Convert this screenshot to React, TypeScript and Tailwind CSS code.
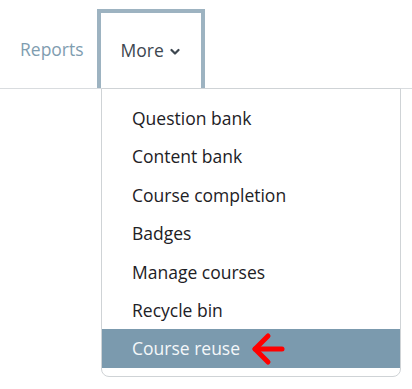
import React from "react";

const items = [
  "Question bank",
  "Content bank",
  "Course completion",
  "Badges",
  "Manage courses",
  "Recycle bin",
];

export default function App() {
  return (
    <div
      className="relative w-[412px] h-[389px] bg-white overflow-hidden"
      style={{ fontFamily: '"Open Sans", "Noto Sans", sans-serif' }}
    >
      {/* nav */}
      <div className="flex items-end h-[89px] border-b border-[#d9dcdf]">
        <div className="flex items-center h-[79px] pl-[20px] pr-[13px] pt-[2px] text-[17.5px] text-[#7f9db0]">
          Reports
        </div>
        <div className="flex items-center h-[79px] w-[108px] border-4 border-b-0 border-[#9db3c1] pl-[20px] text-[17.5px] text-[#3d4750]">
          <span>More</span>
          <svg width="10" height="8" viewBox="0 0 10 8" className="ml-[6px] mt-[2px]">
            <polyline
              points="1.5,2 5,5.5 8.5,2"
              fill="none"
              stroke="#3d4750"
              strokeWidth="2.2"
              strokeLinecap="round"
              strokeLinejoin="round"
            />
          </svg>
        </div>
      </div>

      {/* dropdown */}
      <div className="absolute left-[101px] top-[88px] w-[300px] bg-white border border-[#cfd3d6] rounded-b-lg pt-[10px] pb-[8px]">
        {items.map((t) => (
          <div
            key={t}
            className="flex items-center h-[38.4px] pl-[30px] text-[17.5px] text-[#1d2125]"
          >
            {t}
          </div>
        ))}
        <div className="flex items-center h-[38.4px] pl-[30px] text-[17.5px] text-[#f4f7f9] bg-[#7b9aae]">
          <span>Course reuse</span>
          <svg width="36" height="34" viewBox="0 0 36 34" className="ml-[11px]">
            <g
              fill="none"
              stroke="#ff0000"
              strokeWidth="5"
              strokeLinecap="round"
              strokeLinejoin="round"
            >
              <line x1="4" y1="17" x2="31" y2="17" />
              <polyline points="17,4 4,17 17,30" />
            </g>
          </svg>
        </div>
      </div>
    </div>
  );
}
